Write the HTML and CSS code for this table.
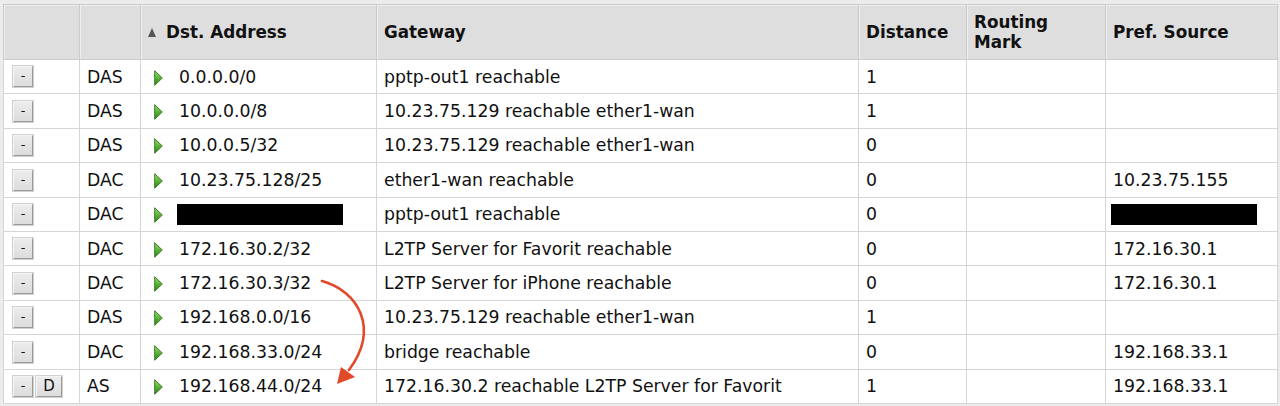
FILE: index.html
```html
<!DOCTYPE html>
<html>
<head>
<meta charset="utf-8">
<link rel="stylesheet" href="styles.css">
</head>
<body>
<div class="wrap">
<svg width="0" height="0" class="defs">
  <defs>
    <linearGradient id="g" x1="0" y1="0" x2="0" y2="1">
      <stop offset="0" stop-color="#9be06a"/>
      <stop offset="0.5" stop-color="#5cb33a"/>
      <stop offset="1" stop-color="#2e7c18"/>
    </linearGradient>
    <symbol id="tri" viewBox="0 0 9 16">
      <polygon points="0.7,0.7 8.3,8 0.7,15.3" fill="url(#g)" stroke="#3c7d26" stroke-width="1" stroke-linejoin="round"/>
    </symbol>
  </defs>
</svg>
<table class="routes">
  <colgroup>
    <col class="c-btn"><col class="c-flag"><col class="c-dst"><col class="c-gw"><col class="c-dist"><col class="c-mark"><col class="c-src">
  </colgroup>
  <thead>
    <tr>
      <th></th>
      <th></th>
      <th><span class="sort"></span>Dst. Address</th>
      <th>Gateway</th>
      <th>Distance</th>
      <th>Routing<br>Mark</th>
      <th>Pref. Source</th>
    </tr>
  </thead>
  <tbody>
    <tr><td><span class="btn">-</span></td><td>DAS</td><td><svg class="arr"><use href="#tri"/></svg>0.0.0.0/0</td><td>pptp-out1 reachable</td><td>1</td><td></td><td></td></tr>
    <tr><td><span class="btn">-</span></td><td>DAS</td><td><svg class="arr"><use href="#tri"/></svg>10.0.0.0/8</td><td>10.23.75.129 reachable ether1-wan</td><td>1</td><td></td><td></td></tr>
    <tr><td><span class="btn">-</span></td><td>DAS</td><td><svg class="arr"><use href="#tri"/></svg>10.0.0.5/32</td><td>10.23.75.129 reachable ether1-wan</td><td>0</td><td></td><td></td></tr>
    <tr><td><span class="btn">-</span></td><td>DAC</td><td><svg class="arr"><use href="#tri"/></svg>10.23.75.128/25</td><td>ether1-wan reachable</td><td>0</td><td></td><td>10.23.75.155</td></tr>
    <tr><td><span class="btn">-</span></td><td>DAC</td><td><svg class="arr"><use href="#tri"/></svg><span class="redact r-dst"></span></td><td>pptp-out1 reachable</td><td>0</td><td></td><td><span class="redact r-src"></span></td></tr>
    <tr><td><span class="btn">-</span></td><td>DAC</td><td><svg class="arr"><use href="#tri"/></svg>172.16.30.2/32</td><td>L2TP Server for Favorit reachable</td><td>0</td><td></td><td>172.16.30.1</td></tr>
    <tr><td><span class="btn">-</span></td><td>DAC</td><td><svg class="arr"><use href="#tri"/></svg>172.16.30.3/32</td><td>L2TP Server for iPhone reachable</td><td>0</td><td></td><td>172.16.30.1</td></tr>
    <tr><td><span class="btn">-</span></td><td>DAS</td><td><svg class="arr"><use href="#tri"/></svg>192.168.0.0/16</td><td>10.23.75.129 reachable ether1-wan</td><td>1</td><td></td><td></td></tr>
    <tr><td><span class="btn">-</span></td><td>DAC</td><td><svg class="arr"><use href="#tri"/></svg>192.168.33.0/24</td><td>bridge reachable</td><td>0</td><td></td><td>192.168.33.1</td></tr>
    <tr><td><span class="btn">-</span><span class="btn btn-d">D</span></td><td>AS</td><td><svg class="arr"><use href="#tri"/></svg>192.168.44.0/24</td><td>172.16.30.2 reachable L2TP Server for Favorit</td><td>1</td><td></td><td>192.168.33.1</td></tr>
  </tbody>
</table>
<svg class="callout" width="1280" height="406" viewBox="0 0 1280 406">
  <path d="M322 281 C 358 291, 380 328, 349 370" fill="none" stroke="#e2492b" stroke-width="2.6" stroke-linecap="round"/>
  <polygon points="337,384 341,367 355,377" fill="#e2492b"/>
</svg>
</div>
</body>
</html>
```
FILE: styles.css
```css
html, body {
  margin: 0;
  padding: 0;
  background: #ececec;
}
.defs {
  position: absolute;
}
.wrap {
  position: relative;
  padding: 4px 3px 0 3px;
  height: 402px;
}
.routes {
  border-collapse: collapse;
  table-layout: fixed;
  width: 1274px;
  font-family: "DejaVu Sans", Verdana, sans-serif;
  font-size: 17.3px;
  color: #111;
  background: #fff;
}
.c-btn { width: 76px; }
.c-flag { width: 61px; }
.c-dst { width: 236px; }
.c-gw { width: 482px; }
.c-dist { width: 108px; }
.c-mark { width: 139px; }
.c-src { width: 172px; }

.routes th {
  height: 54px;
  background: #dedede;
  box-shadow: inset 1px 1px 0 #eeeeee;
  border: 1px solid #cbcbcb;
  text-align: left;
  font-weight: bold;
  font-size: 16.8px;
  padding: 0 7px;
  line-height: 20px;
  color: #111;
}
.routes td {
  height: 33.4px;
  border: 1px solid #d6d6d6;
  padding: 0 7px;
  white-space: nowrap;
  vertical-align: middle;
}
.routes td:first-child {
  padding-left: 9px;
}
.sort {
  display: inline-block;
  width: 0;
  height: 0;
  border-left: 4.5px solid transparent;
  border-right: 4.5px solid transparent;
  border-bottom: 9px solid #555;
  margin: 0 10px 0 0;
  vertical-align: 1px;
}
.arr {
  display: inline-block;
  width: 9px;
  height: 16px;
  margin: 0 16px 0 6px;
  vertical-align: -3px;
}
.btn {
  display: inline-block;
  box-sizing: border-box;
  width: 20px;
  height: 21px;
  line-height: 18px;
  text-align: center;
  font-size: 13px;
  background: linear-gradient(180deg, #ececec, #dcdcdc);
  border: 1px solid;
  border-color: #f4f4f4 #9a9a9a #9a9a9a #f4f4f4;
  box-shadow: 0 0 0 1px #d0d0d0;
  vertical-align: middle;
  color: #111;
}
.btn-d {
  width: 26px;
  margin-left: 3px;
  font-size: 15px;
}
.redact {
  display: inline-block;
  background: #000;
  height: 21px;
  vertical-align: middle;
}
.r-dst { width: 166px; margin-left: -2px; }
.r-src { width: 146px; margin-left: -2px; }
.callout {
  position: absolute;
  left: 0;
  top: 0;
  pointer-events: none;
}
```
